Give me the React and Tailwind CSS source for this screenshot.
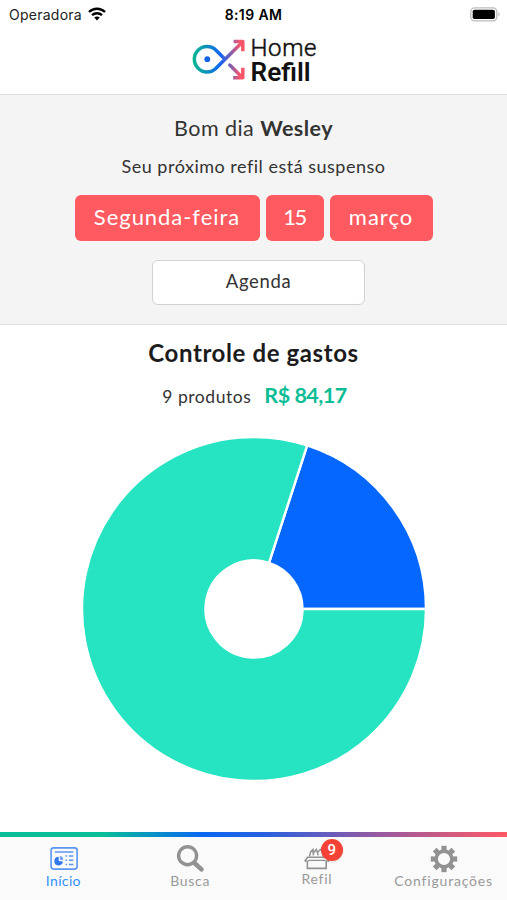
import React from 'react';

const PIE = { size: 346, outer: 172, inner: 48.5 };

const SPENDING = [
  { name: 'Mercearia', share: 0.2, color: '#0667ff' },
  { name: 'Limpeza', share: 0.8, color: '#26e3c2' },
];

const DATE_PARTS = [
  { text: 'Segunda-feira', className: 'w-[185px] tracking-[0.95px]' },
  { text: '15', className: 'w-[58px] tracking-[-1.5px]' },
  { text: 'março', className: 'w-[103px] tracking-[1px]' },
];

function slicePath(start, end) {
  const c = PIE.size / 2;
  const point = (r, t) => {
    const a = t * Math.PI * 2;
    return `${c + r * Math.cos(a)} ${c - r * Math.sin(a)}`;
  };
  const large = end - start > 0.5 ? 1 : 0;
  return `M${point(PIE.outer, start)} A${PIE.outer} ${PIE.outer} 0 ${large} 0 ${point(PIE.outer, end)} L${point(PIE.inner, end)} A${PIE.inner} ${PIE.inner} 0 ${large} 1 ${point(PIE.inner, start)} Z`;
}

function SpendingChart() {
  let start = 0;
  const slices = SPENDING.map((item) => {
    const slice = { ...item, d: slicePath(start, start + item.share) };
    start += item.share;
    return slice;
  });

  return (
    <svg width="346" height="346" viewBox="0 0 346 346" className="shrink-0">
      {slices.map((slice) => (
        <path key={slice.name} d={slice.d} fill={slice.color} stroke="#fff" strokeWidth="2.4" />
      ))}
    </svg>
  );
}

function StatusBar() {
  return (
    <div className="grid h-7 grid-cols-3 items-center font-[Inter,sans-serif] text-[14px] text-[#222]">
      <div className="flex items-center gap-1.5 pl-[9px]">
        <span className="tracking-[0.25px]">Operadora</span>
        <svg width="18" height="14" viewBox="0 0 18 14" fill="none" stroke="#000" strokeWidth="2.4">
          <path d="M1 5 C5.5 0.7 12.5 0.7 17 5" />
          <path d="M4 8.2 C6.8 5.5 11.2 5.5 14 8.2" />
          <path d="M9 13.5 L6.2 10.6 C7.8 9.1 10.2 9.1 11.8 10.6 Z" fill="#000" stroke="none" />
        </svg>
      </div>
      <span className="text-center font-semibold tracking-[0.4px] text-black">8:19 AM</span>
      <div className="flex justify-end pr-[6px]">
        <svg width="31" height="15" viewBox="0 0 31 15">
          <rect x="0.8" y="0.9" width="26" height="13" rx="3.8" fill="#fff" stroke="#bcbcbc" strokeWidth="1.3" />
          <rect x="2.7" y="2.8" width="22.2" height="9.2" rx="1.8" fill="#000" />
          <path d="M28.4 5.2 Q31 7.4 28.4 9.6 Z" fill="#bcbcbc" />
        </svg>
      </div>
    </div>
  );
}

function Logo() {
  return (
    <svg width="128" height="56" viewBox="0 0 128 56">
      <defs>
        <linearGradient id="loop" gradientUnits="userSpaceOnUse" x1="3" y1="0" x2="55" y2="0">
          <stop offset="0" stopColor="#0bb895" />
          <stop offset="0.25" stopColor="#0b93b8" />
          <stop offset="0.52" stopColor="#1264f5" />
          <stop offset="0.72" stopColor="#7c5fb4" />
          <stop offset="0.9" stopColor="#f9566a" />
        </linearGradient>
      </defs>
      <g fill="none" stroke="url(#loop)" strokeWidth="3.5">
        <path d="M35 25.2 L26 16.2 A12.7 12.7 0 1 0 26 34.2 L52 8.4" />
        <path d="M39.8 31 L52 43.2" strokeLinecap="round" />
        <path d="M43.6 7.6 H52.8 V17.2" strokeLinejoin="round" />
        <path d="M52.8 33.8 V43.8 H43.2" strokeLinejoin="round" />
      </g>
      <circle cx="17.3" cy="25.2" r="2.9" fill="#1264e8" />
      <g fill="#111" fontFamily="Roboto, sans-serif">
        <text x="60.5" y="22" fontSize="24" fontWeight="300" textLength="66" lengthAdjust="spacing" stroke="#111" strokeWidth="0.5">Home</text>
        <text x="60.5" y="46.8" fontSize="25.5" fontWeight="600" textLength="60" lengthAdjust="spacingAndGlyphs">Refill</text>
      </g>
    </svg>
  );
}

function HomeIcon() {
  return (
    <svg width="28" height="23" viewBox="0 0 28 23" fill="none" stroke="#5a96f2" className="ml-[2px]">
      <rect x="1.1" y="0.9" width="26" height="21.2" rx="2.5" strokeWidth="1.6" />
      <path d="M4.8 5 H23.4" strokeWidth="1.5" />
      <path d="M15.5 9 H17 M18.8 9 H23.4 M15.5 13.2 H17 M18.8 13.2 H23.4 M15.5 17.4 H17 M18.8 17.4 H23.4" strokeWidth="1.5" />
      <path d="M8.6 9.8 A4.3 4.3 0 1 0 12.9 14.6 L8.8 14.1 Z" fill="#3478ee" stroke="none" />
      <path d="M9.8 9 A3.6 3.6 0 0 1 13.2 13 L9.9 12.7 Z" fill="#6ba0f4" stroke="none" />
    </svg>
  );
}

function SearchIcon() {
  return (
    <svg width="28" height="28" viewBox="0 0 28 28" fill="none" stroke="#929292">
      <circle cx="11.6" cy="10.7" r="9" strokeWidth="3.4" />
      <path d="M18.5 18 L25.4 24.4" strokeWidth="4.6" strokeLinecap="round" />
    </svg>
  );
}

function BoxIcon() {
  return (
    <svg width="26" height="22" viewBox="0 0 26 22" fill="none" stroke="#929292" strokeWidth="1.6">
      <path d="M3.4 13.4 V20.4 H22.2 V13.4" />
      <path d="M0.8 13.2 L3.6 9.2 H22.2 L25 13.2" />
      <path d="M0.8 13.2 H3.4 L5.6 12.4 H20 L22.2 13.2 H25" strokeWidth="1.2" />
      <path d="M5.6 8.4 C5.8 5.4 6.8 3 9 1.4 L9.4 7.4 M9.4 5 L12.4 1.4 L14.2 7.4 M13.6 4.6 L16.2 1.4 C18.4 3 19.2 5.4 19.4 8.4" strokeWidth="1.5" />
    </svg>
  );
}

function GearIcon() {
  return (
    <svg width="28" height="28" viewBox="-14 -14 28 28">
      <g fill="#929292">
        {[0, 45, 90, 135, 180, 225, 270, 315].map((angle) => (
          <path key={angle} d="M-2.6 -8 V-13.2 H2.6 V-8 Z" transform={`rotate(${angle})`} />
        ))}
      </g>
      <circle r="7.9" fill="#fafafa" stroke="#929292" strokeWidth="3.6" />
    </svg>
  );
}

function Tab({ icon, label, labelClass, badge }) {
  return (
    <button className="flex flex-col items-center">
      <span className="relative flex h-[36px] items-center justify-center pt-[7px]">
        {icon}
        {badge && (
          <span className="absolute top-[2px] left-[17px] flex size-[22px] items-center justify-center rounded-full bg-[#f44336] font-[Roboto,sans-serif] text-[15px] font-medium text-white shadow">
            {badge}
          </span>
        )}
      </span>
      <span className={`text-[14px] leading-4 whitespace-nowrap ${labelClass}`}>{label}</span>
    </button>
  );
}

export default function App() {
  return (
    <div className="flex h-[900px] w-[507px] flex-col overflow-hidden bg-white font-[Lato,sans-serif] text-[#333]">
      <StatusBar />
      <header className="flex h-[67px] shrink-0 items-start justify-center border-b border-[#dcdcdc] pt-[6px]">
        <Logo />
      </header>

      <section className="flex h-[230px] shrink-0 flex-col items-center border-b border-[#e2e2e2] bg-[#f4f4f4] pt-[19px]">
        <h1 className="text-[21.5px] leading-7 tracking-[0.45px]">
          Bom dia <b>Wesley</b>
        </h1>
        <p className="mt-[12px] text-[18px] leading-6 tracking-[0.5px]">Seu próximo refil está suspenso</p>
        <div className="mt-[17px] flex gap-[6px]">
          {DATE_PARTS.map((part) => (
            <span
              key={part.text}
              className={`flex h-[46px] items-center justify-center rounded-[6px] bg-[#ff5a60] pb-[4px] text-[22px] text-white ${part.className}`}
            >
              {part.text}
            </span>
          ))}
        </div>
        <button className="mt-[19px] ml-[10px] h-[45px] w-[213px] rounded-[6px] border border-[#d2d2d2] bg-white pb-[2px] text-[18.5px] tracking-[0.65px]">
          Agenda
        </button>
      </section>

      <main className="flex flex-1 flex-col items-center pt-[12px]">
        <h2 className="text-[24px] leading-8 font-bold tracking-[0.6px] text-[#1c1c1c]">Controle de gastos</h2>
        <div className="mt-[10px] flex items-baseline gap-[13px] pl-[2px] leading-8">
          <span className="text-[17.5px] tracking-[0.55px]">9 produtos</span>
          <strong className="text-[21.5px] tracking-[-0.5px] text-[#0cbd96]">R$ 84,17</strong>
        </div>
        <div className="mt-[23px]">
          <SpendingChart />
        </div>
      </main>

      <div className="h-[5px] shrink-0 bg-[linear-gradient(90deg,#06be98_0%,#06be98_20%,#0b67f2_40%,#2760e0_52%,#8b5aa7_72%,#ff5964_100%)]" />
      <nav className="grid h-[63px] shrink-0 grid-cols-4 bg-[#fafafa] text-[#999]">
        <Tab icon={<HomeIcon />} label="Início" labelClass="tracking-[0.35px] text-[#3390ff]" />
        <Tab icon={<SearchIcon />} label="Busca" labelClass="tracking-[0.7px]" />
        <Tab icon={<BoxIcon />} label="Refil" labelClass="-mt-[2px] tracking-[0.7px]" badge="9" />
        <Tab icon={<GearIcon />} label="Configurações" labelClass="tracking-[0.8px]" />
      </nav>
    </div>
  );
}
